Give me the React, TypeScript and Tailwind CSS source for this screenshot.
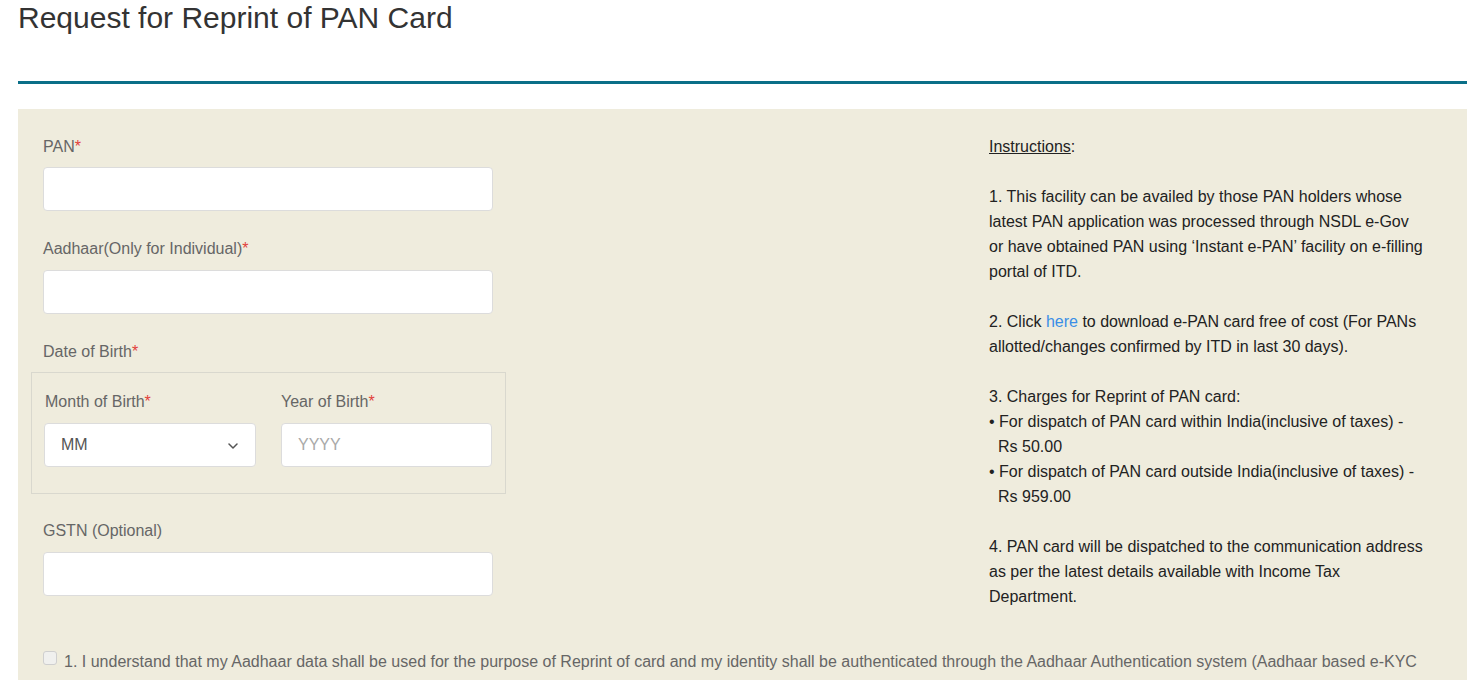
import { useState } from "react";

const Req = () => <span className="text-[#e2403a]">*</span>;

function Label({ children, required = true }: { children: React.ReactNode; required?: boolean }) {
  return (
    <label className="block text-[16px] leading-[20px] text-[#666]">
      {children}
      {required && <Req />}
    </label>
  );
}

const inputCls =
  "block w-full h-[44px] bg-white border border-[#dcdcdc] rounded-[4px] px-[16px] text-[16px] text-[#555] outline-none placeholder:text-[#a9a9a9]";

export default function App() {
  const [pan, setPan] = useState("");
  const [aadhaar, setAadhaar] = useState("");
  const [month, setMonth] = useState("");
  const [year, setYear] = useState("");
  const [gstn, setGstn] = useState("");
  const [agree, setAgree] = useState(false);

  const months = ["01", "02", "03", "04", "05", "06", "07", "08", "09", "10", "11", "12"];

  return (
    <div className="min-h-screen bg-white pl-[18px] pr-[9px] font-['Liberation_Sans',Arial,sans-serif]">
      {/* Header */}
      <h1 className="pt-[1px] text-[30px] leading-[34px] font-normal text-[#333]">
        Request for Reprint of PAN Card
      </h1>
      <div className="mt-[46px] h-[3px] bg-[#0a6f88]" />

      {/* Form panel */}
      <div className="mt-[25px] bg-[#efecdd] px-[25px] pt-[25px] pb-[40px]">
        <div className="flex">
          {/* Left column */}
          <div className="w-[450px] pt-[3px]">
            <Label>PAN</Label>
            <input className={`${inputCls} mt-[10px]`} value={pan} onChange={(e) => setPan(e.target.value)} />

            <div className="mt-[28px]">
              <Label>Aadhaar(Only for Individual)</Label>
            </div>
            <input
              className={`${inputCls} mt-[11px]`}
              value={aadhaar}
              onChange={(e) => setAadhaar(e.target.value)}
            />

            <div className="mt-[28px]">
              <Label>Date of Birth</Label>
            </div>
            <div className="mt-[10px] -ml-[12px] w-[475px] border border-[#d9d8ce] pt-[19px] pb-[26px] pl-[12px] pr-[13px] flex gap-[25px]">
              <div className="w-[212px]">
                <div className="pl-[1px]">
                  <Label>Month of Birth</Label>
                </div>
                <div className="relative mt-[11px]">
                  <select
                    value={month}
                    onChange={(e) => setMonth(e.target.value)}
                    className={`${inputCls} appearance-none`}
                  >
                    <option value="">MM</option>
                    {months.map((m) => (
                      <option key={m} value={m}>
                        {m}
                      </option>
                    ))}
                  </select>
                  <svg
                    className="pointer-events-none absolute right-[18px] top-[20px]"
                    width="10"
                    height="6"
                    viewBox="0 0 10 6"
                    fill="none"
                  >
                    <path d="M1 1l4 4 4-4" stroke="#555" strokeWidth="1.5" strokeLinecap="round" strokeLinejoin="round" />
                  </svg>
                </div>
              </div>
              <div className="w-[211px]">
                <Label>Year of Birth</Label>
                <input
                  className={`${inputCls} mt-[11px]`}
                  placeholder="YYYY"
                  value={year}
                  onChange={(e) => setYear(e.target.value)}
                />
              </div>
            </div>

            <div className="mt-[27px]">
              <Label required={false}>GSTN (Optional)</Label>
            </div>
            <input className={`${inputCls} mt-[11px]`} value={gstn} onChange={(e) => setGstn(e.target.value)} />
          </div>

          {/* Instructions */}
          <div className="ml-auto mr-[10px] w-[443px] whitespace-nowrap text-[16px] leading-[25px] text-[#222]">
            <p>
              <span className="underline">Instructions</span>:
            </p>
            <br />
            <p>
              1. This facility can be availed by those PAN holders whose
              <br />
              latest PAN application was processed through NSDL e-Gov
              <br />
              or have obtained PAN using ‘Instant e-PAN’ facility on e-filling
              <br />
              portal of ITD.
            </p>
            <br />
            <p>
              2. Click{" "}
              <a href="#" className="text-[#3a8ee6]">
                here
              </a>{" "}
              to download e-PAN card free of cost (For PANs
              <br />
              allotted/changes confirmed by ITD in last 30 days).
            </p>
            <br />
            <p>3. Charges for Reprint of PAN card:</p>
            <p className="pl-[9px] -indent-[9px]">
              • For dispatch of PAN card within India(inclusive of taxes) -<br />
              Rs 50.00
            </p>
            <p className="pl-[9px] -indent-[9px]">
              • For dispatch of PAN card outside India(inclusive of taxes) -<br />
              Rs 959.00
            </p>
            <br />
            <p>
              4. PAN card will be dispatched to the communication address
              <br />
              as per the latest details available with Income Tax
              <br />
              Department.
            </p>
          </div>
        </div>

        {/* Consent */}
        <label className="mt-[40px] flex items-start gap-[7px] text-[16px] leading-[25px] text-[#666]">
          <input
            type="checkbox"
            checked={agree}
            onChange={(e) => setAgree(e.target.checked)}
            className="mt-[2px] h-[14px] w-[14px] shrink-0 appearance-none rounded-[3px] border border-[#cfcfcf] bg-[#f0f0ee] checked:bg-[#0a6f88]"
          />
          <span>
            1. I understand that my Aadhaar data shall be used for the purpose of Reprint of card and my identity
            shall be authenticated through the Aadhaar Authentication system (Aadhaar based e-KYC services of
            UIDAI) in accordance with the provisions of the Aadhaar (Targeted Delivery of Financial and other
            Subsidies, Benefits and Services) Act, 2016 and the allied rules and regulations notified thereunder.
          </span>
        </label>
      </div>
    </div>
  );
}
